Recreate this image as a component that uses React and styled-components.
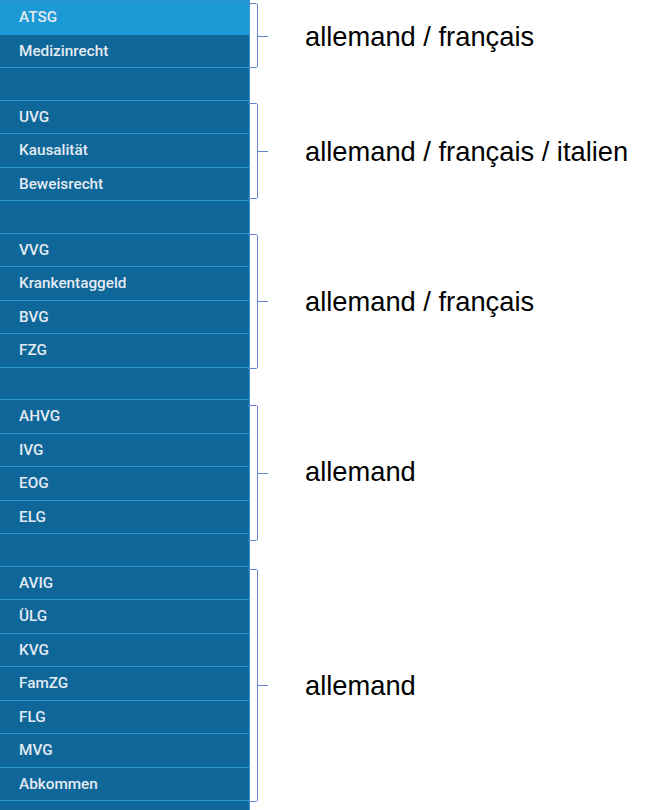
import React from "react";
import styled, { createGlobalStyle } from "styled-components";

const groups = [
  { label: "allemand / français", items: ["ATSG", "Medizinrecht"], active: "ATSG", top: 2, bottom: 0 },
  { label: "allemand / français / italien", items: ["UVG", "Kausalität", "Beweisrecht"], top: 2, bottom: 2 },
  { label: "allemand / français", items: ["VVG", "Krankentaggeld", "BVG", "FZG"], top: 0, bottom: -1 },
  { label: "allemand", items: ["AHVG", "IVG", "EOG", "ELG"], top: 5, bottom: -7 },
  { label: "allemand", items: ["AVIG", "ÜLG", "KVG", "FamZG", "FLG", "MVG", "Abkommen"], top: 2, bottom: -1 },
];

export default function App() {
  return (
    <>
      <GlobalStyle />
      <Page>
        <TopEdge />
        {groups.map((g, i) => (
          <React.Fragment key={i}>
            {i > 0 && <Spacer />}
            <Group>
              <Menu>
                {g.items.map((item) => (
                  <Item key={item} $active={item === g.active}>
                    {item}
                  </Item>
                ))}
              </Menu>
              <Bracket $top={g.top} $bottom={g.bottom}>
                <Tick />
                <BottomTick />
                <MidTick />
              </Bracket>
              <Label $shift={(g.top - g.bottom) / 2}>{g.label}</Label>
            </Group>
          </React.Fragment>
        ))}
        <Spacer />
      </Page>
    </>
  );
}

const GlobalStyle = createGlobalStyle`
  body {
    margin: 0;
    background: #ffffff;
    font-family: Roboto, "Liberation Sans", sans-serif;
  }
`;

const Page = styled.div`
  display: flex;
  flex-direction: column;
  width: 664px;
`;

const TopEdge = styled.div`
  width: 250px;
  height: 1px;
  background: #2a93d0;
`;

const Group = styled.div`
  display: grid;
  grid-template-columns: 250px 20px 1fr;
  align-items: stretch;
`;

const Menu = styled.div`
  display: flex;
  flex-direction: column;
  background: #0e6699;
  border-right: 1px solid #3a9ad6;
`;

const Item = styled.div`
  box-sizing: border-box;
  height: 33.5px;
  display: flex;
  align-items: center;
  padding-left: 19px;
  font-size: 15.3px;
  font-weight: 500;
  color: #e4eaf1;
  background: ${(p) => (p.$active ? "#1b9ad6" : "transparent")};
  border-bottom: 1px solid #2a93d0;
`;

const Spacer = styled.div`
  box-sizing: border-box;
  width: 250px;
  height: 32.5px;
  background: #0e6699;
  border-right: 1px solid #3a9ad6;
  border-bottom: 1px solid #2a93d0;
`;

const Bracket = styled.div`
  position: relative;
  margin-left: -2px;
  margin-top: ${(p) => p.$top}px;
  margin-bottom: ${(p) => p.$bottom}px;
  &::before {
    content: "";
    position: absolute;
    left: 9px;
    top: 1px;
    bottom: 1px;
    width: 1px;
    background: #5f84d2;
  }
`;

const Tick = styled.span`
  position: absolute;
  left: 0;
  top: 0;
  width: 9px;
  height: 1px;
  background: #5f84d2;
  border-top-right-radius: 2px;
`;

const BottomTick = styled(Tick)`
  top: auto;
  bottom: 0;
`;

const MidTick = styled.span`
  position: absolute;
  left: 10px;
  top: 50%;
  width: 10px;
  height: 1px;
  background: #5f84d2;
`;

const Label = styled.div`
  display: flex;
  align-items: center;
  padding-left: 35px;
  padding-top: ${(p) => 3 + p.$shift}px;
  font-family: "Liberation Sans", Arial, sans-serif;
  font-size: 27.3px;
  color: #000000;
`;
